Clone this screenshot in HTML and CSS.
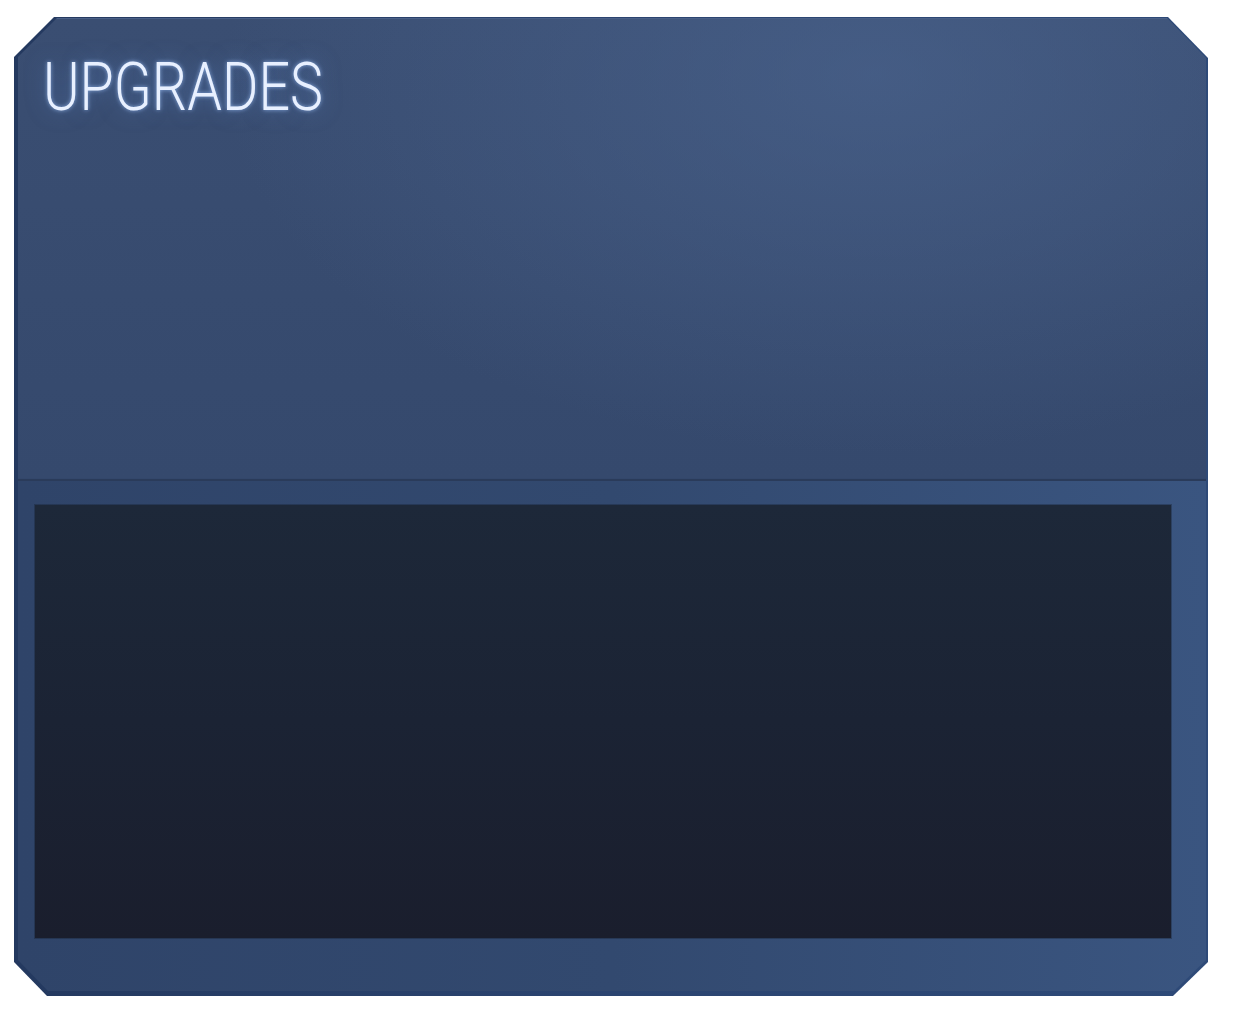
FILE: index.html
```html
<!DOCTYPE html>
<html>
<head>
<meta charset="utf-8">
<link rel="stylesheet" href="styles.css">
</head>
<body>
<div class="panel">
  <div class="panel-inner">
    <div class="top">
      <h1 class="title">UPGRADES</h1>
    </div>
    <div class="divider"></div>
    <div class="bottom">
      <div class="well"></div>
    </div>
  </div>
</div>
</body>
</html>
```
FILE: styles.css
```css
html, body {
  margin: 0;
  padding: 0;
  background: #ffffff;
}
body {
  padding: 17px 32px 25px 14px;
  font-family: Roboto, "Liberation Sans", sans-serif;
}
.panel {
  width: 1194px;
  height: 979px;
  background: linear-gradient(90deg, #24395f 0%, #2b4470 50%, #2e4a78 100%);
  clip-path: polygon(40px 0, calc(100% - 40px) 0, 100% 41px, 100% calc(100% - 34px), calc(100% - 35px) 100%, 33px 100%, 0 calc(100% - 34px), 0 40px);
  padding: 1px 2px 5px 4px;
  box-sizing: border-box;
}
.panel-inner {
  height: 100%;
  display: flex;
  flex-direction: column;
  clip-path: polygon(39px 0, calc(100% - 39px) 0, 100% 40px, 100% calc(100% - 31px), calc(100% - 32px) 100%, 30px 100%, 0 calc(100% - 31px), 0 39px);
}
.top {
  height: 460px;
  box-sizing: border-box;
  padding: 35px 0 0 25px;
  background:
    radial-gradient(ellipse 650px 380px at 72% 12%, rgba(76,102,145,0.6), rgba(76,102,145,0) 100%),
    linear-gradient(180deg, #3a4e72 0%, #35496d 100%);
  border-top: 1px solid #4a6087;
}
.title {
  margin: 0;
  font-weight: 300;
  font-size: 67px;
  line-height: 67px;
  color: #e8f0ff;
  letter-spacing: 0;
  transform: scaleX(0.83);
  transform-origin: left center;
  text-shadow: 0 0 5px rgba(160, 198, 255, 0.75), 0 0 22px rgba(110, 155, 230, 0.5);
  white-space: nowrap;
}
.divider {
  height: 2px;
  background: #2a3b5a;
  border-top: 1px solid #33476b;
}
.bottom {
  flex: 1;
  padding: 24px 35px 53px 17px;
  background: linear-gradient(90deg, #2f4469 0%, #32496f 50%, #3a5580 100%);
}
.well {
  height: 100%;
  background: linear-gradient(180deg, #1d2839 0%, #1b2334 50%, #1a1e2d 100%);
  box-shadow: 0 0 0 1px rgba(20, 28, 44, 0.35);
}
```
